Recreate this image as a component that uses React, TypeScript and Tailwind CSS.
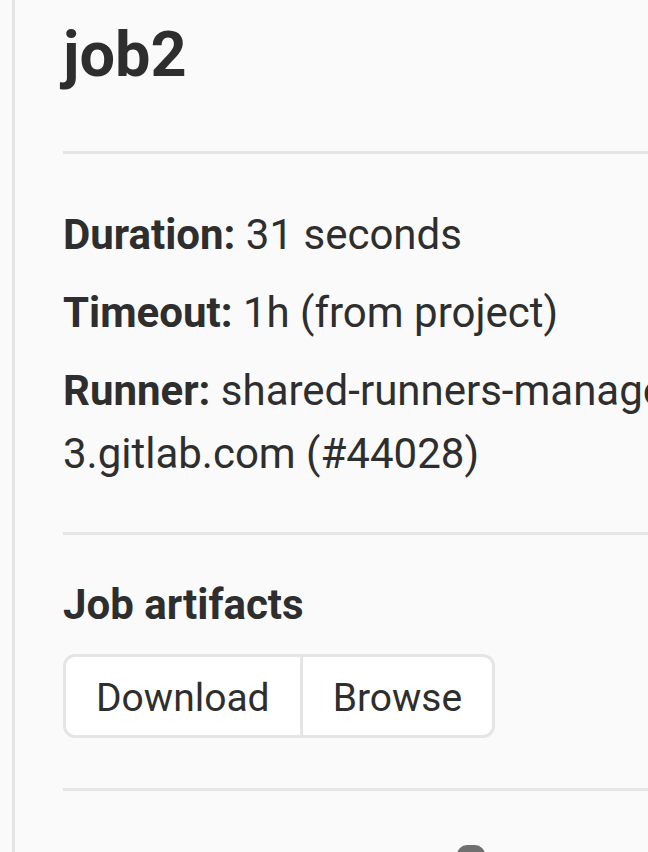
import React from 'react';

const font = { fontFamily: 'Roboto, "Liberation Sans", sans-serif' };

function DetailRow({ label, value, last }: { label: string; value: string; last?: boolean }) {
  return (
    <p className={`text-[42px] leading-[63px] ${last ? '' : 'mb-[15px]'}`}>
      <span className="font-bold">{label}</span> {value}
    </p>
  );
}

export default function App() {
  return (
    <div className="w-[648px] h-[852px] overflow-hidden bg-[#fafafa] text-[#2e2e2e]" style={font}>
      <aside className="ml-[12px] border-l-[3px] border-[#e5e5e5] pl-[48px] w-[820px] h-[852px]">
        <div className="pt-[23px] pb-[65px] border-b-[3px] border-[#e5e5e5]">
          <h2 className="text-[63px] leading-none font-bold">job2</h2>
        </div>

        <div className="pt-[49px] pb-[47px] border-b-[3px] border-[#e5e5e5]">
          <DetailRow label="Duration:" value="31 seconds" />
          <DetailRow label="Timeout:" value="1h (from project)" />
          <DetailRow label="Runner:" value="shared-runners-manager-3.gitlab.com (#44028)" last />
        </div>

        <div className="pt-[38px] pb-[50px] border-b-[3px] border-[#e5e5e5]">
          <p className="text-[42px] leading-[63px] font-bold mb-[18px]">Job artifacts</p>
          <div className="flex">
            <button className="h-[84px] pt-[4px] px-[30px] text-[39px] bg-white border-[3px] border-[#e5e5e5] rounded-l-[12px]">
              Download
            </button>
            <button className="h-[84px] pt-[4px] px-[30px] text-[39px] bg-white border-[3px] border-l-0 border-[#e5e5e5] rounded-r-[12px]">
              Browse
            </button>
          </div>
        </div>

        <div className="pt-[54px] pl-[394px]">
          <svg width="28" height="20" viewBox="0 0 28 20">
            <rect x="0" y="0" width="28" height="40" rx="10" fill="#707070" />
          </svg>
        </div>
      </aside>
    </div>
  );
}
